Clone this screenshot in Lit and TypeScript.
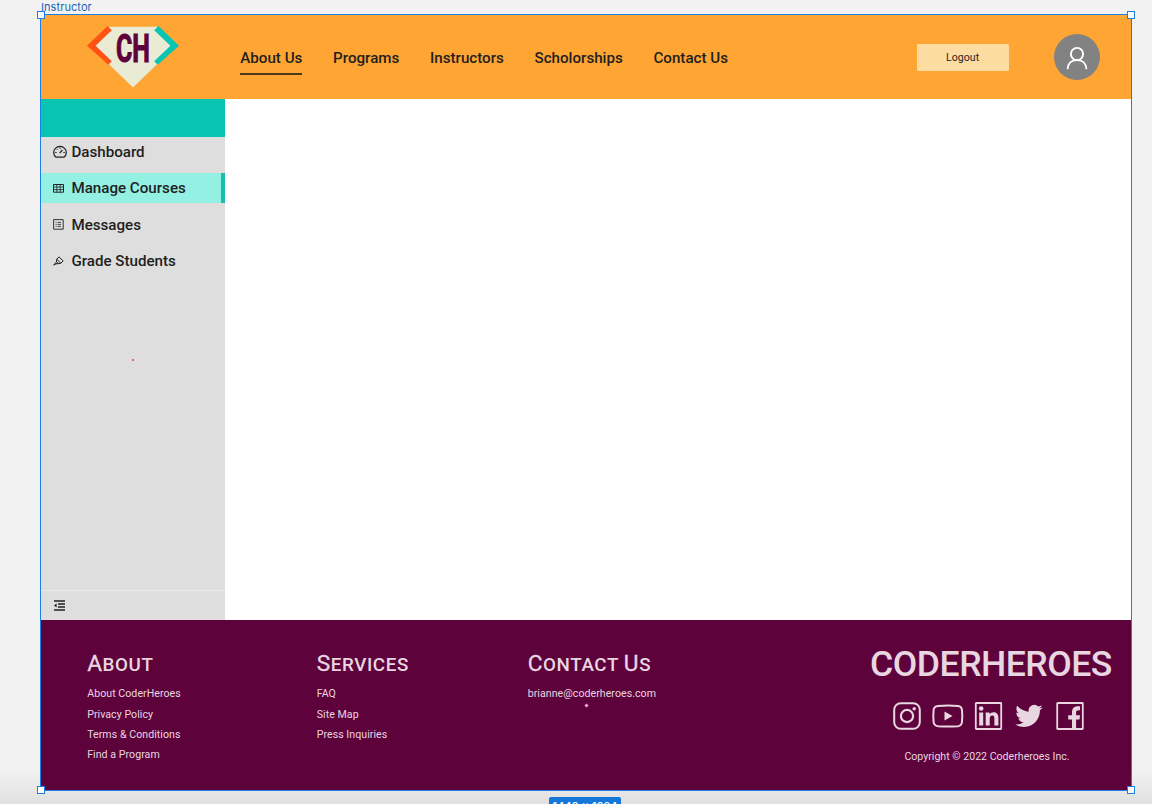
import { LitElement, html, svg, css } from "lit";
import { customElement } from "lit/decorators.js";

const NAV = ["About Us", "Programs", "Instructors", "Scholorships", "Contact Us"];

const dashboard = svg`<svg width="14" height="14" viewBox="0 0 14 14" fill="none" stroke="#222" stroke-width="1.2"><path d="M3 12.2A6.3 6.1 0 1 1 11 12.2Z"/><path d="M6.7 8.1 9.5 4.9" stroke-width="1.3"/><path d="M7 2.4v1.4M2.2 7.5h1.4M10.4 7.5h1.4M3.6 3.9l.9.9" stroke-width="1"/></svg>`;
const table = svg`<svg width="11" height="9" viewBox="0 0 11 9" fill="none" stroke="#222"><path d="M.5.5h10v7.7H.5Z" stroke-width="1"/><path d="M.5 3h10M.5 5.6h10M3.8.5v7.7M7.2.5v7.7" stroke-width=".8"/></svg>`;
const messages = svg`<svg width="11" height="11" viewBox="0 0 11 11" fill="none" stroke="#333"><path d="M.6.6h9.6v9.6H.6Z" stroke-width="1"/><path d="M4.5 3.4H8M4.5 5.4H8M4.5 7.4H8M2.6 3.4h1M2.6 5.4h1M2.6 7.4h1" stroke-width=".9"/></svg>`;
const grade = svg`<svg width="11" height="10" viewBox="0 0 11 10" fill="none" stroke="#222" stroke-width="1" stroke-linejoin="round"><path d="M5.9.9 10.2 4.9 7.7 7.3 3.2 7.9.6 8.9 3.4 6.2 3.8 3.1Z"/><path d="M3.8 3.1 7.7 7.3M3.2 7.9l1.7-1.7"/></svg>`;

const MENU = [
  { label: "Dashboard", icon: dashboard },
  { label: "Manage Courses", icon: table, active: true },
  { label: "Messages", icon: messages },
  { label: "Grade Students", icon: grade },
];

const COLUMNS = [
  { cls: "c1", title: "About", links: ["About CoderHeroes", "Privacy Policy", "Terms & Conditions", "Find a Program"] },
  { cls: "c2", title: "Services", links: ["FAQ", "Site Map", "Press Inquiries"] },
  { cls: "c3", title: "Contact Us", links: ["brianne@coderheroes.com"] },
];

@customElement("app-root")
export class AppRoot extends LitElement {
  static styles = css`
    :host {
      display: block;
      position: relative;
      box-sizing: border-box;
      width: 1152px;
      height: 804px;
      padding: 14px 0 0 40px;
      overflow: hidden;
      background: linear-gradient(#f2f2f2 770px, #e0e0e0 804px);
      font-family: Roboto, "Liberation Sans", sans-serif;
      color: #1f1f1f;
    }
    * { box-sizing: border-box; }
    svg { display: block; flex: none; }
    .frame {
      position: relative;
      width: 1092px;
      height: 777px;
      border: 1px solid #1a80e5;
      background: #fff;
      display: flex;
      flex-direction: column;
    }
    .frame-name {
      position: absolute;
      left: 41px;
      top: 1px;
      font: 11px/13px Inter, sans-serif;
      letter-spacing: 0.08px;
      color: #1a66b8;
    }
    .handle {
      position: absolute;
      width: 8px;
      height: 8px;
      background: #fff;
      border: 1px solid #1a80e5;
    }
    .tl { left: -4px; top: -4px; }
    .tr { right: -4px; top: -4px; }
    .bl { left: -4px; bottom: -4px; }
    .br { right: -4px; bottom: -4px; }
    .size {
      position: absolute;
      left: 549px;
      top: 797px;
      width: 72px;
      height: 18px;
      border-radius: 2px;
      background: #1378d8;
      color: #fff;
      text-align: center;
      font: 500 11px/18px Inter, sans-serif;
    }
    header {
      height: 84.4px;
      flex: none;
      background: #ffa533;
      display: flex;
      align-items: flex-start;
    }
    .logo { margin: 11px 0 0 46px; }
    .logo text { font: 700 38.5px Roboto, sans-serif; }
    nav { display: flex; gap: 30.7px; margin: 33px 0 0 61.3px; }
    .tab {
      height: 27px;
      padding-top: 1px;
      font-weight: 500;
      font-size: 15.15px;
      line-height: 19px;
      white-space: nowrap;
      border-bottom: 2px solid transparent;
    }
    .tab.on { border-color: #4d3a1d; }
    .logout {
      margin: 28.5px 0 0 auto;
      width: 92px;
      height: 27px;
      padding: 0;
      border: 0;
      border-radius: 1.5px;
      background: #fddca2;
      color: #29251d;
      font: 10.6px/27px Roboto, sans-serif;
    }
    .avatar {
      width: 46px;
      height: 46px;
      margin: 19px 31px 0 45.4px;
      border-radius: 50%;
      background: #828282;
    }
    .body { height: 521px; flex: none; display: flex; }
    aside {
      width: 184px;
      background: #dedede;
      display: flex;
      flex-direction: column;
    }
    .band { height: 37.6px; background: #07c4b3; }
    .menu { display: flex; flex-direction: column; gap: 6.3px; }
    .item {
      height: 30px;
      display: flex;
      align-items: center;
      font-weight: 500;
      font-size: 15.15px;
      white-space: nowrap;
    }
    .item.on { background: #93f0e3; border-right: 4px solid #18bfae; }
    .ico { width: 30.4px; padding-left: 12px; }
    .collapse {
      height: 30.5px;
      margin-top: auto;
      border-top: 1px solid #ebebeb;
      padding: 9px 0 0 13px;
    }
    .dot { position: absolute; width: 2px; height: 2px; }
    .d1 { left: 91px; top: 344px; background: #e56a78; }
    .d2 { left: 543.5px; top: 688.5px; width: 3px; height: 3px; background: #f3a8da; transform: rotate(45deg); }
    footer {
      flex: 1;
      background: #5e023c;
      color: #e8d6e0;
      display: flex;
      padding-left: 46.2px;
    }
    .col { padding-top: 30px; white-space: nowrap; }
    .c1 { width: 229.5px; }
    .c2 { width: 211px; }
    h2 { margin: 0 0 4.8px; font-weight: 500; font-size: 18.8px; line-height: 27px; letter-spacing: 0.6px; }
    h2 .cap { font-size: 22.7px; font-weight: 400; -webkit-text-stroke: 0.3px #e8d6e0; }
    .link { font-size: 10.6px; line-height: 20.4px; letter-spacing: 0.05px; }
    .brand { margin: 22.5px 18.5px 0 auto; width: 243px; display: flex; flex-direction: column; align-items: center; }
    .word { font-weight: 500; font-size: 35.6px; line-height: 43px; letter-spacing: -0.5px; white-space: nowrap; }
    .social { margin: 16.4px 5px 0 0; }
    .copy { font-size: 10.6px; line-height: 14px; margin: 20px 8px 0 0; white-space: nowrap; }
  `;

  render() {
    return html`
      <div class="frame-name">Instructor</div>
      <div class="frame">
        <header>
          <svg class="logo" width="92" height="62" viewBox="0 0 92 62">
            <path d="M22 .7H70L89 20 46 61.5 3 20Z" fill="#e9ebd5"/>
            <path d="M20.5 0 24.8 4.3 8.6 19.7 24.8 35.3 21.3 38.8 0 19.7Z" fill="#ff5315"/>
            <path d="M71.5 0 67.2 4.3 83.4 19.7 67.2 35.3 70.7 38.8 92 19.7Z" fill="#07c4b3"/>
            <text x="29" y="35.5" textLength="34" lengthAdjust="spacingAndGlyphs" fill="#5e023c" stroke="#5e023c" stroke-width="1">CH</text>
          </svg>
          <nav>${NAV.map((n, i) => html`<div class="tab ${i === 0 ? "on" : ""}">${n}</div>`)}</nav>
          <button class="logout">Logout</button>
          <svg class="avatar" viewBox="0 0 46 46" fill="none" stroke="#fff" stroke-width="1.9">
            <circle cx="23" cy="20" r="6.1"/><path d="M13.6 35.2C13.8 29.5 17.6 26 23 26S32.2 29.5 32.4 35.2"/>
          </svg>
        </header>
        <div class="body">
          <aside>
            <div class="band"></div>
            <div class="menu">
              ${MENU.map((m) => html`<div class="item ${m.active ? "on" : ""}"><span class="ico">${m.icon}</span>${m.label}</div>`)}
            </div>
            <div class="collapse">
              <svg width="11" height="12" viewBox="0 0 11 12" stroke="#222" stroke-width="1.3" fill="#222">
                <path d="M0 1H11M4 4H11M4 7H11M0 10H11" fill="none"/><path d="M0 5.5 2.6 3.5V7.5Z" stroke="none"/>
              </svg>
            </div>
          </aside>
        </div>
        <footer>
          ${COLUMNS.map((c) => html`<section class="col ${c.cls}">
            <h2>${c.title.split(" ").map((w, i) => html`${i ? " " : ""}<span class="cap">${w[0]}</span>${w.slice(1).toUpperCase()}`)}</h2>
            ${c.links.map((l) => html`<div class="link">${l}</div>`)}
          </section>`)}
          <section class="brand">
            <div class="word">CODERHEROES</div>
            <svg class="social" width="192" height="28" viewBox="0 0 192 28" fill="none" stroke="#e8d6e0" stroke-width="2">
              <rect x="1.2" y="1.2" width="25.6" height="25.6" rx="6.5"/><circle cx="14" cy="14" r="6.1" stroke-width="2.2"/><circle cx="21.2" cy="6.8" r="1.7" fill="#e8d6e0" stroke="none"/>
              <path d="M45 4Q55 3.2 65 4Q68.6 4.3 69 8Q69.6 14 69 20Q68.6 23.7 65 24.2Q55 25 45 24.2Q41 23.7 40.6 20Q40 14 40.6 8Q41 4.3 45 4Z"/><path d="M51.5 9.5V18.5L59.5 14Z" fill="#e8d6e0" stroke="none"/>
              <rect x="82.8" y="1" width="25.4" height="26" rx=".5" stroke-width="1.8"/>
              <g fill="#e8d6e0" stroke="none">
                <circle cx="88.2" cy="6.5" r="2.3"/><path d="M86.2 10.5H90.2V23.5H86.2ZM92.7 10.5H96.5V12.3C97.3 11 98.7 10.2 100.6 10.2 104.3 10.2 105.4 12.6 105.4 16.3V23.5H101.4V17.1C101.4 15.3 101.2 13.6 99.3 13.6 97.3 13.6 96.7 15 96.7 17V23.5H92.7Z"/>
                <g transform="translate(122.3 .2) scale(1.14)"><path d="M23.953 4.57a10 10 0 01-2.825.775 4.958 4.958 0 002.163-2.723c-.951.555-2.005.959-3.127 1.184a4.92 4.92 0 00-8.384 4.482C7.69 8.095 4.067 6.13 1.64 3.162a4.822 4.822 0 00-.666 2.475c0 1.71.87 3.213 2.188 4.096a4.904 4.904 0 01-2.228-.616v.06a4.923 4.923 0 003.946 4.827 4.996 4.996 0 01-2.212.085 4.936 4.936 0 004.604 3.417 9.867 9.867 0 01-6.102 2.105c-.39 0-.779-.023-1.17-.067a13.995 13.995 0 007.557 2.209c9.053 0 13.998-7.496 13.998-13.985 0-.21 0-.42-.015-.63A9.935 9.935 0 0024 4.59z"/></g>
                <path d="M179 27V17.5H175.2V13.2H179V10.2C179 6.2 181.3 4.2 184.8 4.2H187V8.2H185.8C183.8 8.2 183.1 9 183.1 10.6V13.2H187L186.5 17.5H183.1V27Z"/>
              </g>
              <rect x="164.2" y="1" width="25.6" height="26" rx=".5" stroke-width="1.8"/>
            </svg>
            <div class="copy">Copyright © 2022 Coderheroes Inc.</div>
          </section>
        </footer>
        <i class="dot d1"></i><i class="dot d2"></i>
        <i class="handle tl"></i><i class="handle tr"></i><i class="handle bl"></i><i class="handle br"></i>
      </div>
      <div class="size">1440 × 1024</div>
    `;
  }
}
